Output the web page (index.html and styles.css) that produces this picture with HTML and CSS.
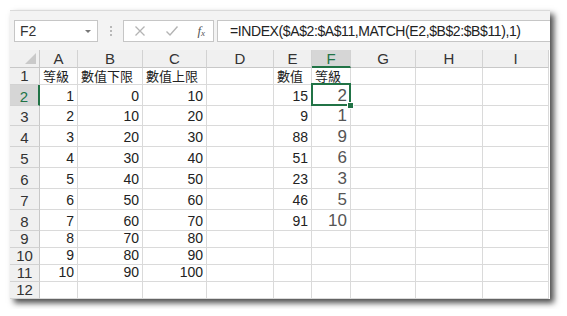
FILE: index.html
```html
<!DOCTYPE html>
<html lang="zh-Hant">
<head>
  <meta charset="UTF-8" />
  <meta name="viewport" content="width=device-width, initial-scale=1.0"/>
  <title>等級查詢</title>
  <link rel="stylesheet" href="styles.css">
</head>
<body>
  <div class="window">

    <!-- Barra de fórmulas -->
    <div class="toolbar">
      <div class="name-box">
        <span>F2</span>
        <span class="arrow"></span>
      </div>
      <div class="dots"><i></i><i></i><i></i></div>
      <div class="fx-box">
        <svg width="12" height="12" viewBox="0 0 12 12"><path d="M1.5 1.5 L10.5 10.5 M10.5 1.5 L1.5 10.5" stroke="#b4b4b4" stroke-width="1.3" fill="none"/></svg>
        <svg width="14" height="12" viewBox="0 0 14 12"><path d="M1.5 6.5 L5 10 L12.5 1.5" stroke="#b4b4b4" stroke-width="1.4" fill="none"/></svg>
        <span class="fx">f<sub>x</sub></span>
      </div>
      <div class="formula">=INDEX($A$2:$A$11,MATCH(E2,$B$2:$B$11),1)</div>
    </div>

    <!-- Planilha -->
    <div class="sheet" id="sheet"></div>
  </div>

  <script>
    const cols = ['A', 'B', 'C', 'D', 'E', 'F', 'G', 'H', 'I'];
    const data = [
      ['等級', '數值下限', '數值上限', '', '數值', '等級'],
      [1, 0, 10, '', 15, 2],
      [2, 10, 20, '', 9, 1],
      [3, 20, 30, '', 88, 9],
      [4, 30, 40, '', 51, 6],
      [5, 40, 50, '', 23, 3],
      [6, 50, 60, '', 46, 5],
      [7, 60, 70, '', 91, 10],
      [8, 70, 80],
      [9, 80, 90],
      [10, 90, 100],
      []
    ];

    const sheet = document.getElementById('sheet');

    function cell(cls, text) {
      const d = document.createElement('div');
      d.className = cls;
      if (text !== undefined && text !== '') d.textContent = text;
      sheet.appendChild(d);
      return d;
    }

    // cabeçalho das colunas
    cell('corner');
    cols.forEach(c => cell(c === 'F' ? 'col-head selected' : 'col-head', c));

    // linhas
    data.forEach((row, r) => {
      cell(r === 1 ? 'row-head selected' : 'row-head', r + 1);
      cols.forEach((c, i) => {
        const v = row[i];
        let cls = 'cell';
        if (typeof v === 'number') cls += ' num';
        if (i === 5 && typeof v === 'number') cls += ' big';
        if (r === 1 && i === 5) cls += ' active';
        cell(cls, v);
      });
    });
  </script>
</body>
</html>
```

FILE: styles.css
```css
body {
  margin: 0;
  padding: 10px;
  background: #fff;
  font-family: "Liberation Sans Narrow", "Liberation Sans", "Noto Sans CJK TC", sans-serif;
  color: #222;
}

.window {
  width: 540px;
  height: 289px;
  background: #f3f3f3;
  box-shadow: 4px 4px 6px rgba(0, 0, 0, 0.7);
  display: flex;
  flex-direction: column;
  overflow: hidden;
}

.toolbar {
  height: 40px;
  box-sizing: border-box;
  padding: 9px 0 0 4px;
  display: flex;
  align-items: flex-start;
  border-top: 1px solid #dadada;
}

.name-box, .fx-box, .formula {
  height: 22px;
  box-sizing: border-box;
  background: #fff;
  border: 1px solid #c6c6c6;
  display: flex;
  align-items: center;
  flex-shrink: 0;
}

.name-box {
  width: 84px;
  padding: 0 6px 0 5px;
  justify-content: space-between;
  font-size: 14px;
  color: #333;
}

.arrow {
  width: 0;
  height: 0;
  border-left: 3px solid transparent;
  border-right: 3px solid transparent;
  border-top: 3px solid #777;
}

.dots {
  width: 25px;
  flex-shrink: 0;
  display: flex;
  flex-direction: column;
  align-items: center;
  gap: 2px;
  padding-top: 6px;
}

.dots i {
  width: 2px;
  height: 2px;
  background: #b8b8b8;
}

.fx-box {
  width: 91px;
  padding: 0 8px 0 10px;
  justify-content: space-between;
}

.fx {
  font-family: "Liberation Serif", serif;
  font-style: italic;
  font-size: 13px;
  color: #555;
}

.fx sub {
  font-size: 9px;
  vertical-align: -1px;
}

.formula {
  flex: 1 1 auto;
  min-width: 0;
  margin-left: 3px;
  border-right: none;
  padding-left: 12px;
  font-size: 14px;
  letter-spacing: -0.4px;
  color: #222;
  white-space: nowrap;
  overflow: hidden;
}

.sheet {
  flex: 1;
  display: grid;
  grid-template-columns: 30px 38px 65px 64px 67px 38px 39px 65px 67px 66px;
  grid-template-rows: 18px 17px 21px 20px 21px 21px 21px 21px 21px 17px 17px 17px 17px;
  background: #fff;
}

.sheet > div {
  box-sizing: border-box;
  border-right: 1px solid #dadada;
  border-bottom: 1px solid #dadada;
  font-size: 14px;
  line-height: 15px;
  display: flex;
  align-items: flex-end;
  padding: 0 3px 1px 3px;
  white-space: nowrap;
}

.corner {
  background: #f0f0f0;
  position: relative;
  border-color: #c8c8c8 !important;
}

.corner::after {
  content: "";
  position: absolute;
  right: 3px;
  bottom: 3px;
  border-left: 11px solid transparent;
  border-bottom: 11px solid #c9c9c9;
}

.sheet > .col-head {
  background: #f0f0f0;
  border-color: #d2d2d2;
  border-bottom-color: #c8c8c8;
  justify-content: center;
  align-items: center;
  font-size: 15px;
  color: #333;
  padding: 0;
}

.sheet > .row-head {
  background: #f0f0f0;
  border-color: #d2d2d2;
  border-right-color: #c8c8c8;
  justify-content: center;
  font-size: 15px;
  color: #333;
  padding: 0 0 1px 0;
}

.sheet > .col-head.selected {
  background: #d6d6d6;
  border-bottom: 2px solid #217346;
  color: #217346;
}

.sheet > .row-head.selected {
  background: #d6d6d6;
  border-right: 2px solid #217346;
  color: #217346;
}

.cell {
  font-family: "Noto Sans CJK TC", sans-serif;
  font-size: 13px !important;
  line-height: 14px !important;
  color: #222;
}

.num {
  font-family: "Liberation Sans Narrow", "Liberation Sans", sans-serif;
  font-size: 14px !important;
  line-height: 15px !important;
  justify-content: flex-end;
}

.big {
  font-size: 17px !important;
  line-height: 17px !important;
  color: #555 !important;
  padding-bottom: 1px !important;
}

.active {
  position: relative;
}

.active::before {
  content: "";
  position: absolute;
  top: -2px;
  left: -1px;
  right: -1px;
  bottom: -1px;
  border: 2px solid #217346;
}

.active::after {
  content: "";
  position: absolute;
  right: -4px;
  bottom: -4px;
  width: 5px;
  height: 5px;
  background: #217346;
  border: 1px solid #fff;
}
```
